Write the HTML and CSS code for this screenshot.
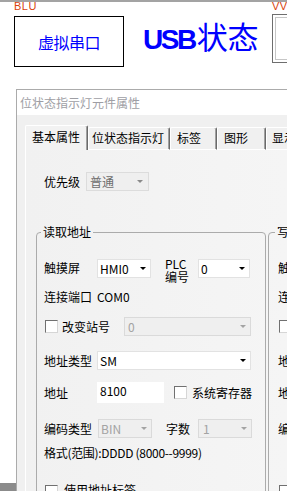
FILE: index.html
```html
<!DOCTYPE html>
<html lang="zh-CN">
<head>
<meta charset="utf-8">
<title>位状态指示灯元件属性</title>
<link rel="stylesheet" href="styles.css">
</head>
<body>
<div class="top">
  <div class="col-blu">
    <div class="tag">BLU</div>
    <div class="vbox">虚拟串口</div>
  </div>
  <div class="usb"><span class="usb-en">USB</span>状态</div>
  <div class="col-wv">
    <div class="tag">VVI</div>
    <div class="wbox"><div class="wbox-in"></div></div>
  </div>
</div>
<div class="lower">
  <div class="gutter"><div class="gutter-block"></div></div>
  <div class="window">
    <div class="titlebar">位状态指示灯元件属性</div>
    <div class="client">
      <div class="tabs">
        <div class="tab tab-active">基本属性</div>
        <div class="tab tab-bit">位状态指示灯</div>
        <div class="tab tab-label">标签</div>
        <div class="tab tab-shape">图形</div>
        <div class="tab tab-show">显示设置</div>
      </div>
      <div class="panel">
        <div class="prio-row">
          <span class="lbl">优先级</span>
          <div class="sel sel-prio"><span>普通</span><i class="arrow arrow-gray"></i></div>
        </div>
        <div class="groups">
          <fieldset class="group">
            <legend class="legend-read">读取地址</legend>
            <div class="gbody gbody-read">
              <div class="row r1">
                <span class="lbl lbl-53 lbl-top">触摸屏</span>
                <div class="sel sel-hmi"><span>HMI0</span><i class="arrow"></i></div>
                <span class="lbl lbl-plc">PLC<br>编号</span>
                <div class="sel sel-plc"><span>0</span><i class="arrow"></i></div>
              </div>
              <div class="row r2">
                <span class="lbl lbl-53">连接端口</span>
                <span class="val">COM0</span>
              </div>
              <div class="row r3">
                <span class="chk"></span>
                <span class="lbl lbl-station">改变站号</span>
                <div class="sel sel-dis sel-station"><span>0</span><i class="arrow arrow-dis"></i></div>
              </div>
              <div class="row r4">
                <span class="lbl lbl-53">地址类型</span>
                <div class="sel sel-type"><span>SM</span><i class="arrow"></i></div>
              </div>
              <div class="row r5">
                <span class="lbl lbl-53">地址</span>
                <div class="inp">8100</div>
                <span class="chk chk-sys"></span>
                <span class="lbl lbl-sys">系统寄存器</span>
              </div>
              <div class="row r6">
                <span class="lbl lbl-54">编码类型</span>
                <div class="sel sel-dis sel-bin"><span>BIN</span><i class="arrow arrow-dis"></i></div>
                <span class="lbl lbl-words">字数</span>
                <div class="sel sel-dis sel-words"><span>1</span><i class="arrow arrow-dis"></i></div>
              </div>
              <div class="row r7">
                <span class="lbl lbl-fmt">格式(范围):DDDD (8000--9999)</span>
              </div>
              <div class="row r8">
                <span class="chk"></span>
                <span class="lbl lbl-tag">使用地址标签</span>
              </div>
            </div>
          </fieldset>
          <fieldset class="group">
            <legend class="legend-write">写入地址</legend>
            <div class="gbody gbody-write">
              <div class="row r1">
                <span class="lbl lbl-53 lbl-top">触摸屏</span>
              </div>
              <div class="row r2">
                <span class="lbl lbl-53">连接端口</span>
              </div>
              <div class="row r3">
                <span class="chk"></span>
                <span class="lbl lbl-station">改变站号</span>
              </div>
              <div class="row r4">
                <span class="lbl lbl-53">地址类型</span>
              </div>
              <div class="row r5">
                <span class="lbl lbl-53">地址</span>
              </div>
              <div class="row r6">
                <span class="lbl lbl-54">编码类型</span>
              </div>
              <div class="row r7"></div>
              <div class="row r8">
                <span class="chk"></span>
                <span class="lbl lbl-tag">使用地址标签</span>
              </div>
            </div>
          </fieldset>
        </div>
      </div>
    </div>
  </div>
</div>
</body>
</html>
```
FILE: styles.css
```css
html, body {
  margin: 0;
  padding: 0;
}
body {
  width: 287px;
  height: 491px;
  overflow: hidden;
  background: #fff;
  font-family: "Noto Sans CJK SC", "Noto Sans", sans-serif;
  font-size: 12px;
  color: #000;
}

/* ---------- top canvas ---------- */
.top {
  height: 87px;
  border-top: 2px solid #a3a3a3;
  display: flex;
  align-items: flex-start;
  overflow: hidden;
}
.col-blu {
  margin-left: 14px;
  flex: none;
}
.tag {
  height: 14px;
  line-height: 8px;
  font-family: "Liberation Sans", sans-serif;
  font-size: 11px;
  color: #d9420b;
  letter-spacing: 0.5px;
}
.vbox {
  width: 108px;
  height: 49px;
  border: 1px solid #000;
  display: flex;
  align-items: center;
  justify-content: center;
  color: #0000ff;
  font-size: 16px;
  letter-spacing: -0.5px;
}
.usb {
  margin-left: 19px;
  margin-top: 17px;
  flex: none;
  color: #0000ff;
  font-size: 31px;
  line-height: 34px;
  white-space: nowrap;
}
.usb-en {
  font-family: "Liberation Sans", sans-serif;
  font-weight: bold;
  font-size: 28px;
  letter-spacing: -2.5px;
  margin-right: 2px;
}
.col-wv {
  margin-left: auto;
  width: 15px;
  flex: none;
}
.col-wv .tag {
  height: 12px;
}
.wbox {
  width: 40px;
  height: 43px;
  border: 1px solid #6e6e6e;
  padding: 2px;
  background: #fff;
}
.wbox-in {
  height: 41px;
  border: 1px solid #c6c6c6;
}

/* ---------- lower area ---------- */
.lower {
  height: 402px;
  display: flex;
}
.gutter {
  width: 16px;
  flex: none;
  display: flex;
  flex-direction: column;
}
.gutter-block {
  margin-top: auto;
  height: 8px;
  background: #8b8b8b;
}
.window {
  flex: 1;
  min-width: 0;
  border-left: 1px solid #ababab;
  border-top: 1px solid #ababab;
  overflow: hidden;
  display: flex;
  flex-direction: column;
}
.titlebar {
  height: 25px;
  line-height: 25px;
  background: #fff;
  padding-left: 3px;
  color: #9e9ea4;
  white-space: nowrap;
}
.client {
  flex: 1;
  background: #f0f0f0;
  padding-top: 10px;
  display: flex;
  flex-direction: column;
}
.tabs {
  display: flex;
  align-items: flex-end;
  padding-left: 8px;
  height: 25px;
  flex: none;
}
.tab {
  flex: none;
  box-sizing: border-box;
  height: 23px;
  line-height: 19px;
  border-top: 1px solid #fff;
  border-left: 1px solid #fff;
  border-right: 1px solid #6a6a6a;
  border-bottom: 1px solid #fff;
  box-shadow: inset -1px 0 #a0a0a0;
  background: #f0f0f0;
  padding-left: 6px;
  white-space: nowrap;
  overflow: hidden;
  border-radius: 2px 2px 0 0;
}
.tab-active {
  width: 63px;
  height: 25px;
  line-height: 22px;
  border-bottom: none;
  background: #f2f2f2;
}
.tab-bit {
  width: 82px;
  padding-left: 3px;
}
.tab-label {
  width: 47px;
}
.tab-shape {
  width: 49px;
}
.tab-show {
  width: 80px;
  padding-left: 5px;
}
.panel {
  flex: 1;
  margin-left: 8px;
  border-left: 1px solid #fff;
  background: linear-gradient(to right, #f1f1f1, #f5f5f5);
  overflow: hidden;
}

/* ---------- controls ---------- */
.lbl {
  flex: none;
  line-height: 14px;
  white-space: nowrap;
}
.prio-row {
  margin-top: 22px;
  margin-left: 18px;
  height: 19px;
  display: flex;
  align-items: center;
  gap: 6px;
}
.sel {
  flex: none;
  box-sizing: border-box;
  height: 19px;
  border: 1px solid #e2e2e2;
  background: #fff;
  display: flex;
  align-items: center;
  justify-content: space-between;
  padding: 0 4px 0 2px;
  line-height: 14px;
  white-space: nowrap;
}
.sel-dis {
  background: #efefef;
  border-color: #dadada;
  color: #a3a3a3;
}
.sel-prio {
  width: 63px;
  background: #efefef;
  border-color: #dcdcdc;
  color: #6d6d6d;
  padding-left: 3px;
  padding-right: 5px;
}
.arrow {
  width: 0;
  height: 0;
  border-left: 3px solid transparent;
  border-right: 3px solid transparent;
  border-top: 3px solid #000;
}
.arrow-gray {
  border-top-color: #8a8a8a;
}
.arrow-dis {
  border-top-color: #a3a3a3;
}

.groups {
  margin-top: 34px;
  margin-left: 10px;
  display: flex;
  gap: 2px;
}
.group {
  flex: none;
  box-sizing: border-box;
  width: 230px;
  height: 300px;
  margin: 0;
  padding: 0;
  min-width: 0;
  border: 1px solid #ababab;
  border-radius: 4px;
}
.group legend {
  padding: 0 2px;
  line-height: 14px;
  font-size: 12px;
}
.legend-read {
  margin-left: 4px;
}
.legend-write {
  margin-left: 6px;
}
.gbody-read {
  padding-left: 7px;
}
.gbody-write {
  padding-left: 9px;
}
.row {
  display: flex;
  align-items: center;
}
.r1 {
  margin-top: 18px;
  height: 26px;
  align-items: flex-start;
}
.r2 {
  margin-top: 7px;
  height: 14px;
}
.r3 {
  margin-top: 13px;
  height: 19px;
}
.r4 {
  margin-top: 15px;
  height: 19px;
}
.r5 {
  margin-top: 12px;
  height: 21px;
}
.r6 {
  margin-top: 16px;
  height: 19px;
}
.r7 {
  margin-top: 8px;
  height: 14px;
}
.r8 {
  margin-top: 23px;
  height: 14px;
  align-items: flex-start;
}
.lbl-53 {
  width: 53px;
}
.lbl-54 {
  width: 54px;
}
.lbl-top {
  margin-top: 4px;
}
.lbl-plc {
  margin-left: 14px;
  width: 33px;
  line-height: 13px;
}
.r1 .sel {
  margin-top: 2px;
}
.sel-hmi {
  width: 54px;
}
.sel-plc {
  width: 52px;
}
.val {
  line-height: 14px;
}
.chk {
  flex: none;
  box-sizing: border-box;
  width: 13px;
  height: 13px;
  margin-left: 1px;
  background: #fff;
  border: 1px solid;
  border-color: #707070 #d6d6d6 #d6d6d6 #707070;
}
.r8 .chk {
  margin-top: 2px;
}
.lbl-station {
  margin-left: 4px;
  width: 62px;
}
.sel-station {
  width: 127px;
  padding-left: 3px;
}
.sel-type {
  width: 154px;
}
.inp {
  flex: none;
  box-sizing: border-box;
  width: 67px;
  height: 21px;
  background: #fff;
  padding: 2px 0 0 3px;
  line-height: 14px;
  align-self: flex-start;
}
.chk-sys {
  margin-left: 10px;
}
.lbl-sys {
  margin-left: 5px;
}
.sel-bin {
  width: 54px;
}
.lbl-words {
  margin-left: 14px;
  width: 32px;
}
.sel-words {
  width: 54px;
  padding-left: 4px;
}
.lbl-fmt {
  letter-spacing: -0.3px;
}
.lbl-tag {
  margin-left: 6px;
}
```
